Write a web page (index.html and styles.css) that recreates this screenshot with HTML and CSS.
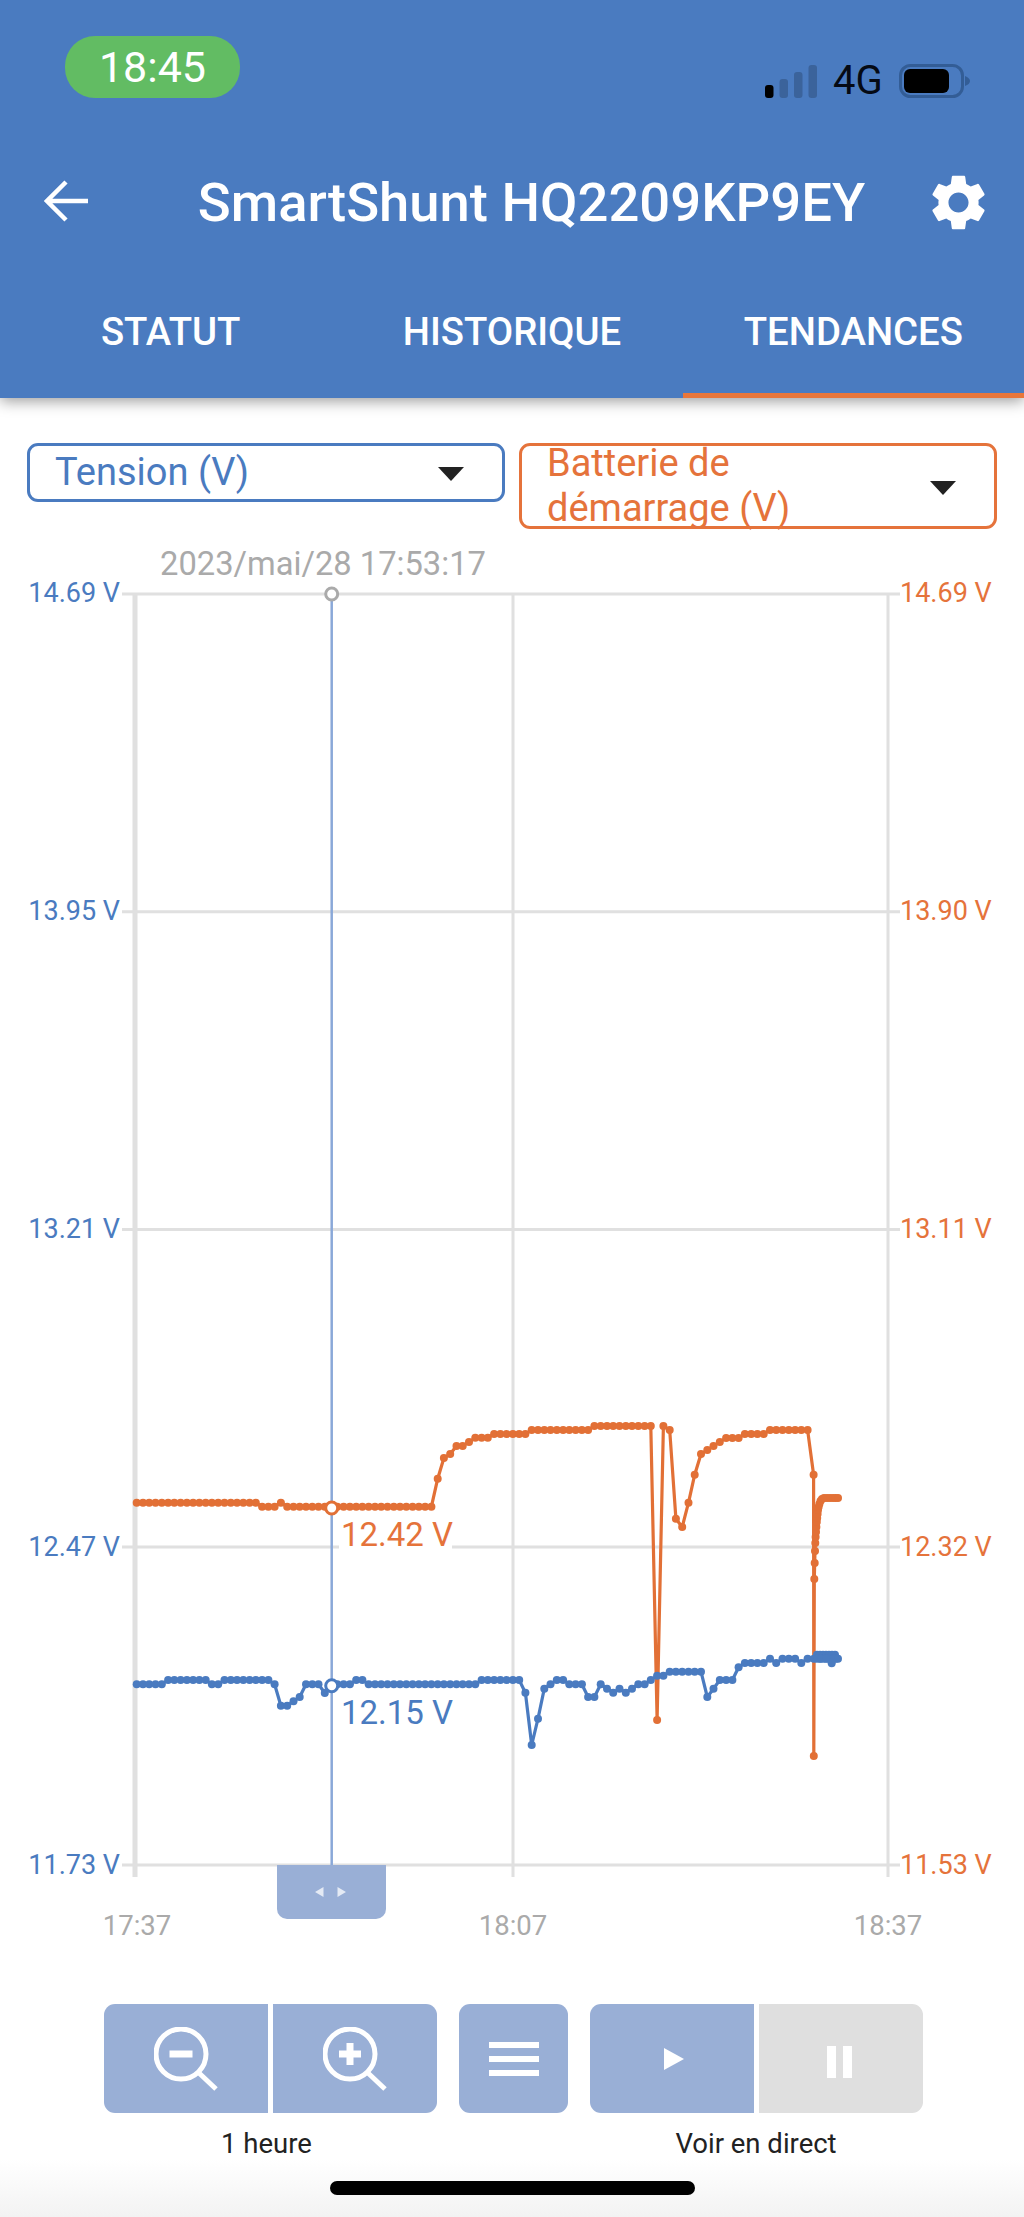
FILE: index.html
```html
<!DOCTYPE html>
<html lang="fr">
<head>
    <meta charset="UTF-8">
    <meta name="viewport" content="width=device-width, initial-scale=1.0">
    <title>SmartShunt HQ2209KP9EY</title>
    <link rel="stylesheet" href="styles.css">
</head>
<body>

    <header class="header">
        <div class="status-row">
            <div class="time-pill">18:45</div>
            <div class="status-icons">
                <svg class="signal" width="52" height="33" viewBox="0 0 52 33">
                    <rect x="0" y="20" width="8.5" height="13" rx="3" fill="#000"/>
                    <rect x="14.5" y="14" width="8.5" height="19" rx="3" fill="#3b639b"/>
                    <rect x="29" y="7" width="8.5" height="26" rx="3" fill="#3b639b"/>
                    <rect x="43.5" y="0" width="8.5" height="33" rx="3" fill="#3b639b"/>
                </svg>
                <span class="network">4G</span>
                <svg class="battery" width="73" height="34" viewBox="0 0 73 34">
                    <rect x="1.5" y="1.5" width="62" height="31" rx="10" fill="none" stroke="#335d96" stroke-width="3"/>
                    <rect x="5" y="5" width="45" height="24" rx="6" fill="#000"/>
                    <path d="M66 12c3 1 5 3 5 5s-2 4-5 5z" fill="#335d96"/>
                </svg>
            </div>
        </div>

        <div class="title-row">
            <svg class="back" width="44" height="44" viewBox="0 0 44 44">
                <path d="M22 2 3 21l19 19M3 21h41" fill="none" stroke="#fff" stroke-width="4.5"/>
            </svg>
            <h1 class="title">SmartShunt HQ2209KP9EY</h1>
            <svg class="gear" width="67" height="67" viewBox="0 0 24 24">
                <path fill="#fff" d="M19.14 12.94c.04-.3.06-.61.06-.94 0-.32-.02-.64-.07-.94l2.03-1.58c.18-.14.23-.41.12-.61l-1.92-3.32c-.12-.22-.37-.29-.59-.22l-2.39.96c-.5-.38-1.03-.7-1.62-.94l-.36-2.54c-.04-.24-.24-.41-.48-.41h-3.84c-.24 0-.43.17-.47.41l-.36 2.54c-.59.24-1.13.57-1.62.94l-2.39-.96c-.22-.08-.47 0-.59.22L2.74 8.87c-.12.21-.08.47.12.61l2.03 1.58c-.05.3-.09.63-.09.94s.02.64.07.94l-2.03 1.58c-.18.14-.23.41-.12.61l1.92 3.32c.12.22.37.29.59.22l2.39-.96c.5.38 1.03.7 1.62.94l.36 2.54c.05.24.24.41.48.41h3.84c.24 0 .44-.17.47-.41l.36-2.54c.59-.24 1.13-.56 1.62-.94l2.39.96c.22.08.47 0 .59-.22l1.92-3.32c.12-.22.07-.47-.12-.61l-2.01-1.58zM12 15.6c-1.98 0-3.6-1.62-3.6-3.6s1.62-3.6 3.6-3.6 3.6 1.62 3.6 3.6-1.62 3.6-3.6 3.6z"/>
            </svg>
        </div>

        <nav class="tabs">
            <div class="tab">STATUT</div>
            <div class="tab">HISTORIQUE</div>
            <div class="tab active">TENDANCES</div>
        </nav>
    </header>

    <div class="selects">
        <div class="select select-blue">
            <span>Tension (V)</span>
            <i class="caret"></i>
        </div>
        <div class="select select-orange">
            <span>Batterie de<br>démarrage (V)</span>
            <i class="caret"></i>
        </div>
    </div>

    <!-- viewBox uses page coordinates so the values read straight off the screenshot -->
    <svg class="chart" width="1024" height="1400" viewBox="0 545 1024 1400">
        <defs>
            <marker id="dotOrange" markerUnits="userSpaceOnUse" markerWidth="10" markerHeight="10" refX="5" refY="5">
                <circle cx="5" cy="5" r="4" fill="#e27036"/>
            </marker>
            <marker id="dotBlue" markerUnits="userSpaceOnUse" markerWidth="10" markerHeight="10" refX="5" refY="5">
                <circle cx="5" cy="5" r="4" fill="#4a7bc0"/>
            </marker>
        </defs>

        <text class="stamp" x="323" y="575">2023/mai/28 17:53:17</text>

        <!-- grid -->
        <g class="grid">
            <path d="M122 594H900M122 911.7H900M122 1229.5H900M122 1547H900M122 1865H900"/>
            <path d="M513 594V1877M888 594V1877"/>
            <path class="axis" d="M135 594V1877"/>
        </g>

        <!-- left axis -->
        <g class="ticks-left">
            <text x="120" y="602">14.69 V</text>
            <text x="120" y="920">13.95 V</text>
            <text x="120" y="1238">13.21 V</text>
            <text x="120" y="1556">12.47 V</text>
            <text x="120" y="1874">11.73 V</text>
        </g>

        <!-- right axis -->
        <g class="ticks-right">
            <text x="900" y="602">14.69 V</text>
            <text x="900" y="920">13.90 V</text>
            <text x="900" y="1238">13.11 V</text>
            <text x="900" y="1556">12.32 V</text>
            <text x="900" y="1874">11.53 V</text>
        </g>

        <g class="ticks-time">
            <text x="137" y="1935">17:37</text>
            <text x="513" y="1935">18:07</text>
            <text x="888" y="1935">18:37</text>
        </g>

        <!-- cursor -->
        <line class="cursor" x1="331.7" y1="594" x2="331.7" y2="1865"/>
        <circle class="cursor-top" cx="331.7" cy="594" r="6"/>

        <rect x="339" y="1540" width="113" height="14" fill="#fff"/>

        <polyline class="line-orange" marker-start="url(#dotOrange)" marker-mid="url(#dotOrange)" marker-end="url(#dotOrange)" points="
            136.7,1502.7 143,1502.7 149.2,1502.7 155.5,1502.7 161.8,1502.7 168.1,1502.7 174.3,1502.7 180.6,1502.7 186.9,1502.7 193.1,1502.7
            199.4,1502.7 205.7,1502.7 211.9,1502.7 218.2,1502.7 224.5,1502.7 230.8,1502.7 237,1502.7 243.3,1502.7 249.6,1502.7 255.8,1502.7
            262.1,1506.7 268.4,1506.7 274.6,1506.7 280.9,1502.7 287.2,1506.7 293.5,1506.7 299.7,1506.7 306,1506.7 312.3,1506.7 318.5,1506.7
            324.8,1506.7 331.1,1506.7 337.3,1506.7 343.6,1506.7 349.9,1506.7 356.2,1506.7 362.4,1506.7 368.7,1506.7 375,1506.7 381.2,1506.7
            387.5,1506.7 393.8,1506.7 400,1506.7 406.3,1506.7 412.6,1506.7 418.9,1506.7 425.1,1506.7 431.4,1506.7 437.7,1478.7 443.9,1458
            450.2,1454 456.5,1446 462.7,1446 469,1442 475.3,1437.7 481.6,1437.7 487.8,1437.7 494.1,1434 500.4,1434 506.6,1434
            512.9,1434 519.2,1434 525.4,1434 531.7,1430 538,1430 544.3,1430 550.5,1430 556.8,1430 563.1,1430 569.3,1430
            575.6,1430 581.9,1430 588.1,1430 594.4,1426 600.7,1426 607,1426 613.2,1426 619.5,1426 625.8,1426 632,1426
            638.3,1426 644.6,1426 650.8,1426 657.1,1720 663.4,1426 669.7,1430 675.9,1518.7 682.2,1527 688.5,1502.7 694.7,1474.7
            701,1454 707.3,1450 713.5,1446 719.8,1442 726.1,1438 732.4,1438 738.6,1438 744.9,1434 751.2,1434 757.4,1434
            763.7,1434 770,1430 776.2,1430 782.5,1430 788.8,1430 795.1,1430 801.3,1430 807.6,1430 813.6,1474.7 813.8,1756
            814.3,1579 814.7,1563 815,1551 815.3,1543 815.6,1537 816,1532 816.4,1527 816.8,1522 817.2,1518 817.6,1514
            818,1510 818.6,1507 819.4,1504 820.5,1501 822,1499 824,1498 827,1498 830,1498 833,1498 835.5,1498 838,1498"/>

        <polyline class="line-blue" marker-start="url(#dotBlue)" marker-mid="url(#dotBlue)" marker-end="url(#dotBlue)" points="
            136.7,1684.3 143,1684.3 149.2,1684.3 155.5,1684.3 161.8,1684.3 168.1,1680 174.3,1680 180.6,1680 186.9,1680 193.1,1680
            199.4,1680 205.7,1680 211.9,1684.3 218.2,1684.3 224.5,1680 230.8,1680 237,1680 243.3,1680 249.6,1680 255.8,1680
            262.1,1680 268.4,1680 274.6,1684.3 280.9,1705.7 287.2,1705.7 293.5,1701.3 299.7,1697 306,1684.3 312.3,1684.3 318.5,1684.3
            324.8,1693 331.1,1685.7 337.3,1684.3 343.6,1684.3 349.9,1684.3 356.2,1680 362.4,1680 368.7,1684.3 375,1684.3 381.2,1684.3
            387.5,1684.3 393.8,1684.3 400,1684.3 406.3,1684.3 412.6,1684.3 418.9,1684.3 425.1,1684.3 431.4,1684.3 437.7,1684.3 443.9,1684.3
            450.2,1684.3 456.5,1684.3 462.7,1684.3 469,1684.3 475.3,1684.3 481.6,1680 487.8,1680 494.1,1680 500.4,1680 506.6,1680
            512.9,1680 519.2,1680 525.4,1692.7 531.7,1745 538,1718.7 544.3,1688.7 550.5,1684.3 556.8,1680 563.1,1680 569.3,1684.3
            575.6,1684.3 581.9,1684.3 588.1,1697 594.4,1697 600.7,1684.3 607,1688.7 613.2,1692.7 619.5,1688.7 625.8,1692.7 632,1688.7
            638.3,1684.3 644.6,1684.3 650.8,1680 657.1,1675.7 663.4,1675.7 669.7,1671.7 675.9,1671.7 682.2,1671.7 688.5,1671.7 694.7,1671.7
            701,1671.7 707.3,1697 713.5,1688.7 719.8,1680 726.1,1680 732.4,1680 738.6,1667.3 744.9,1663 751.2,1663 757.4,1663
            763.7,1663 770,1658.7 776.2,1663 782.5,1658.7 788.8,1658.7 795.1,1658.7 801.3,1663 807.6,1658.7 813.9,1658.7 817,1654.7
            820,1654.7 823,1654.7 826,1654.7 829,1654.7 832,1654.7 835,1654.7 836,1658.7 832,1658.7 828,1658.7 824,1658.7
            820,1658.7 817,1658.7 821,1658.7 826,1658.7 831.7,1663.3 834,1658.7 838,1658.7"/>

        <circle class="point-orange" cx="331.7" cy="1508" r="6"/>
        <circle class="point-blue" cx="331.7" cy="1685.7" r="6"/>

        <text class="value-orange" x="341" y="1546">12.42 V</text>
        <text class="value-blue" x="341" y="1724">12.15 V</text>

        <!-- cursor drag handle -->
        <path class="handle" d="M277 1865H386V1909a10 10 0 0 1-10 10H287a10 10 0 0 1-10-10Z"/>
        <path class="handle-arrows" d="M323.5 1887V1897L315 1892ZM337.5 1887V1897L346 1892Z"/>
    </svg>

    <div class="controls">
        <div class="btn-group">
            <div class="btn btn-wide">
                <svg width="64" height="64" viewBox="0 0 64 64">
                    <circle class="icon-stroke" cx="27" cy="27" r="25"/>
                    <path class="icon-stroke" d="M45 46 62 62"/>
                    <rect class="icon-fill" x="15.5" y="23.5" width="23" height="7"/>
                </svg>
            </div>
            <div class="btn btn-wide">
                <svg width="64" height="64" viewBox="0 0 64 64">
                    <circle class="icon-stroke" cx="27" cy="27" r="25"/>
                    <path class="icon-stroke" d="M45 46 62 62"/>
                    <path class="icon-fill" d="M23.5 16h7v7.5H38v7h-7.5V38h-7v-7.500H16v-7h7.500z"/>
                </svg>
            </div>
        </div>
        <div class="btn btn-menu">
            <svg width="50" height="34" viewBox="0 0 50 34">
                <path class="icon-fill" d="M0 0h50v6H0zM0 14h50v6H0zM0 28h50v6H0z"/>
            </svg>
        </div>
        <div class="btn-group">
            <div class="btn btn-wide">
                <svg class="icon-play" width="20" height="22" viewBox="0 0 20 22">
                    <path class="icon-fill" d="M0 0 20 11 0 22z"/>
                </svg>
            </div>
            <div class="btn btn-wide btn-off">
                <svg class="icon-pause" width="25" height="32" viewBox="0 0 25 32">
                    <path class="icon-fill" d="M0 0h9v32H0zM16 0h9v32h-9z"/>
                </svg>
            </div>
        </div>
    </div>

    <div class="control-labels">
        <div class="label-zoom">1 heure</div>
        <div class="label-live">Voir en direct</div>
    </div>

    <div class="home-area">
        <div class="home-bar"></div>
    </div>

</body>
</html>
```

FILE: styles.css
```css
* {
    box-sizing: border-box;
}
html, body {
    margin: 0;
    height: 2217px;
    overflow: hidden;
}
body {
    font-family: Roboto, "Liberation Sans", sans-serif;
    background-color: #fff;
}

/* header */
.header {
    height: 398px;
    background-color: #4a7bc0;
    box-shadow: 0 3px 14px rgba(0, 0, 0, 0.4);
    position: relative;
    color: #fff;
}
.status-row {
    height: 150px;
    padding: 36px 52px 0 65px;
    display: flex;
    justify-content: space-between;
    align-items: flex-start;
}
.time-pill {
    width: 175px;
    height: 62px;
    border-radius: 30px;
    background-color: #62bc63;
    font-size: 43px;
    line-height: 62px;
    text-align: center;
}
.status-icons {
    margin-top: 28px;
    display: flex;
    align-items: center;
}
.network {
    width: 82px;
    padding-left: 16px;
    font-size: 40px;
    line-height: 34px;
    color: #050a14;
}
.title-row {
    height: 104px;
    padding: 0 32px 0 44px;
    display: flex;
    align-items: center;
}
.title {
    flex: 1;
    margin: 0;
    padding-left: 50px;
    text-align: center;
    font-size: 54.400px;
    font-weight: 500;
    white-space: nowrap;
}
.tabs {
    display: flex;
    margin-top: 16px;
}
.tab {
    flex: 1;
    height: 128px;
    border-bottom: 5px solid transparent;
    display: flex;
    align-items: center;
    justify-content: center;
    font-size: 38.300px;
    font-weight: 500;
}
.tab.active {
    border-bottom-color: #e8763a;
}

/* dropdowns */
.selects {
    display: flex;
    gap: 14px;
    align-items: flex-start;
    padding: 45px 27px 0;
}
.select {
    width: 478px;
    display: flex;
    align-items: center;
    justify-content: space-between;
    padding: 0 38px 0 25px;
    border: 3px solid;
    border-radius: 11px;
    font-size: 38px;
    line-height: 45.5px;
}
.select-blue {
    height: 59px;
    border-color: #4a7bc0;
    color: #4a7bc0;
}
.select-orange {
    height: 86px;
    border-color: #e5733b;
    color: #e5733b;
}
.caret {
    width: 0;
    height: 0;
    border-left: 13.5px solid transparent;
    border-right: 13.5px solid transparent;
    border-top: 14px solid #222;
    margin-top: 3px;
}

/* chart */
.chart {
    display: block;
    margin-top: 16px;
    font-family: Roboto, "Liberation Sans", sans-serif;
}
.stamp {
    font-size: 32.700px;
    fill: #aaa;
    text-anchor: middle;
}
.grid path {
    fill: none;
    stroke: #e0e0e0;
    stroke-width: 3;
}
.grid .axis {
    stroke-width: 5;
}
.ticks-left text {
    font-size: 27px;
    fill: #4a7bc0;
    text-anchor: end;
}
.ticks-right text {
    font-size: 27px;
    fill: #e5733b;
}
.ticks-time text {
    font-size: 27.500px;
    fill: #aaa;
    text-anchor: middle;
}
.cursor {
    stroke: #8aa8d8;
    stroke-width: 2.5;
}
.cursor-top {
    fill: #fff;
    stroke: #aaa;
    stroke-width: 3;
}
.line-orange, .line-blue {
    fill: none;
    stroke-width: 3.2;
    stroke-linejoin: round;
}
.line-orange {
    stroke: #e27036;
}
.line-blue {
    stroke: #4a7bc0;
}
.point-orange {
    fill: #fff;
    stroke: #e27036;
    stroke-width: 3;
}
.point-blue {
    fill: #fff;
    stroke: #4a7bc0;
    stroke-width: 3;
}
.value-orange {
    font-size: 33px;
    fill: #e5733b;
}
.value-blue {
    font-size: 33px;
    fill: #4a7bc0;
}
.handle {
    fill: #99afd6;
}
.handle-arrows {
    fill: #e4eaf4;
}

/* buttons under the chart */
.controls {
    display: flex;
    gap: 22px;
    margin-top: 59px;
    padding-left: 104px;
}
.btn-group {
    display: flex;
    gap: 5px;
}
.btn {
    height: 109px;
    background-color: #99afd6;
    display: flex;
    align-items: center;
    justify-content: center;
}
.btn-wide {
    width: 164px;
}
.btn-group .btn:first-child {
    border-radius: 11px 0 0 11px;
}
.btn-group .btn:last-child {
    border-radius: 0 11px 11px 0;
}
.btn-menu {
    width: 109px;
    border-radius: 11px;
}
.btn-off {
    background-color: #dfdfdf;
}
.icon-stroke {
    fill: none;
    stroke: #fff;
    stroke-width: 5;
}
.icon-fill {
    fill: #fff;
}
.icon-play {
    margin-left: 3px;
}
.icon-pause {
    margin: 6px 3px 0 0;
}
.control-labels {
    position: relative;
    height: 30px;
    margin-top: 16px;
    font-size: 27.500px;
    line-height: 30px;
    color: #222;
    display: flex;
    padding-left: 104px;
}
.label-zoom {
    width: 325px;
    text-align: center;
}
.label-live {
    width: 336px;
    margin-left: 159px;
    text-align: center;
}

/* home indicator */
.home-area {
    height: 72px;
    padding-top: 22px;
    background: linear-gradient(#fff 0%, #f0f0f0 100%);
}
.home-bar {
    width: 365px;
    height: 14px;
    margin-left: 330px;
    border-radius: 7px;
    background-color: #000;
}
```
